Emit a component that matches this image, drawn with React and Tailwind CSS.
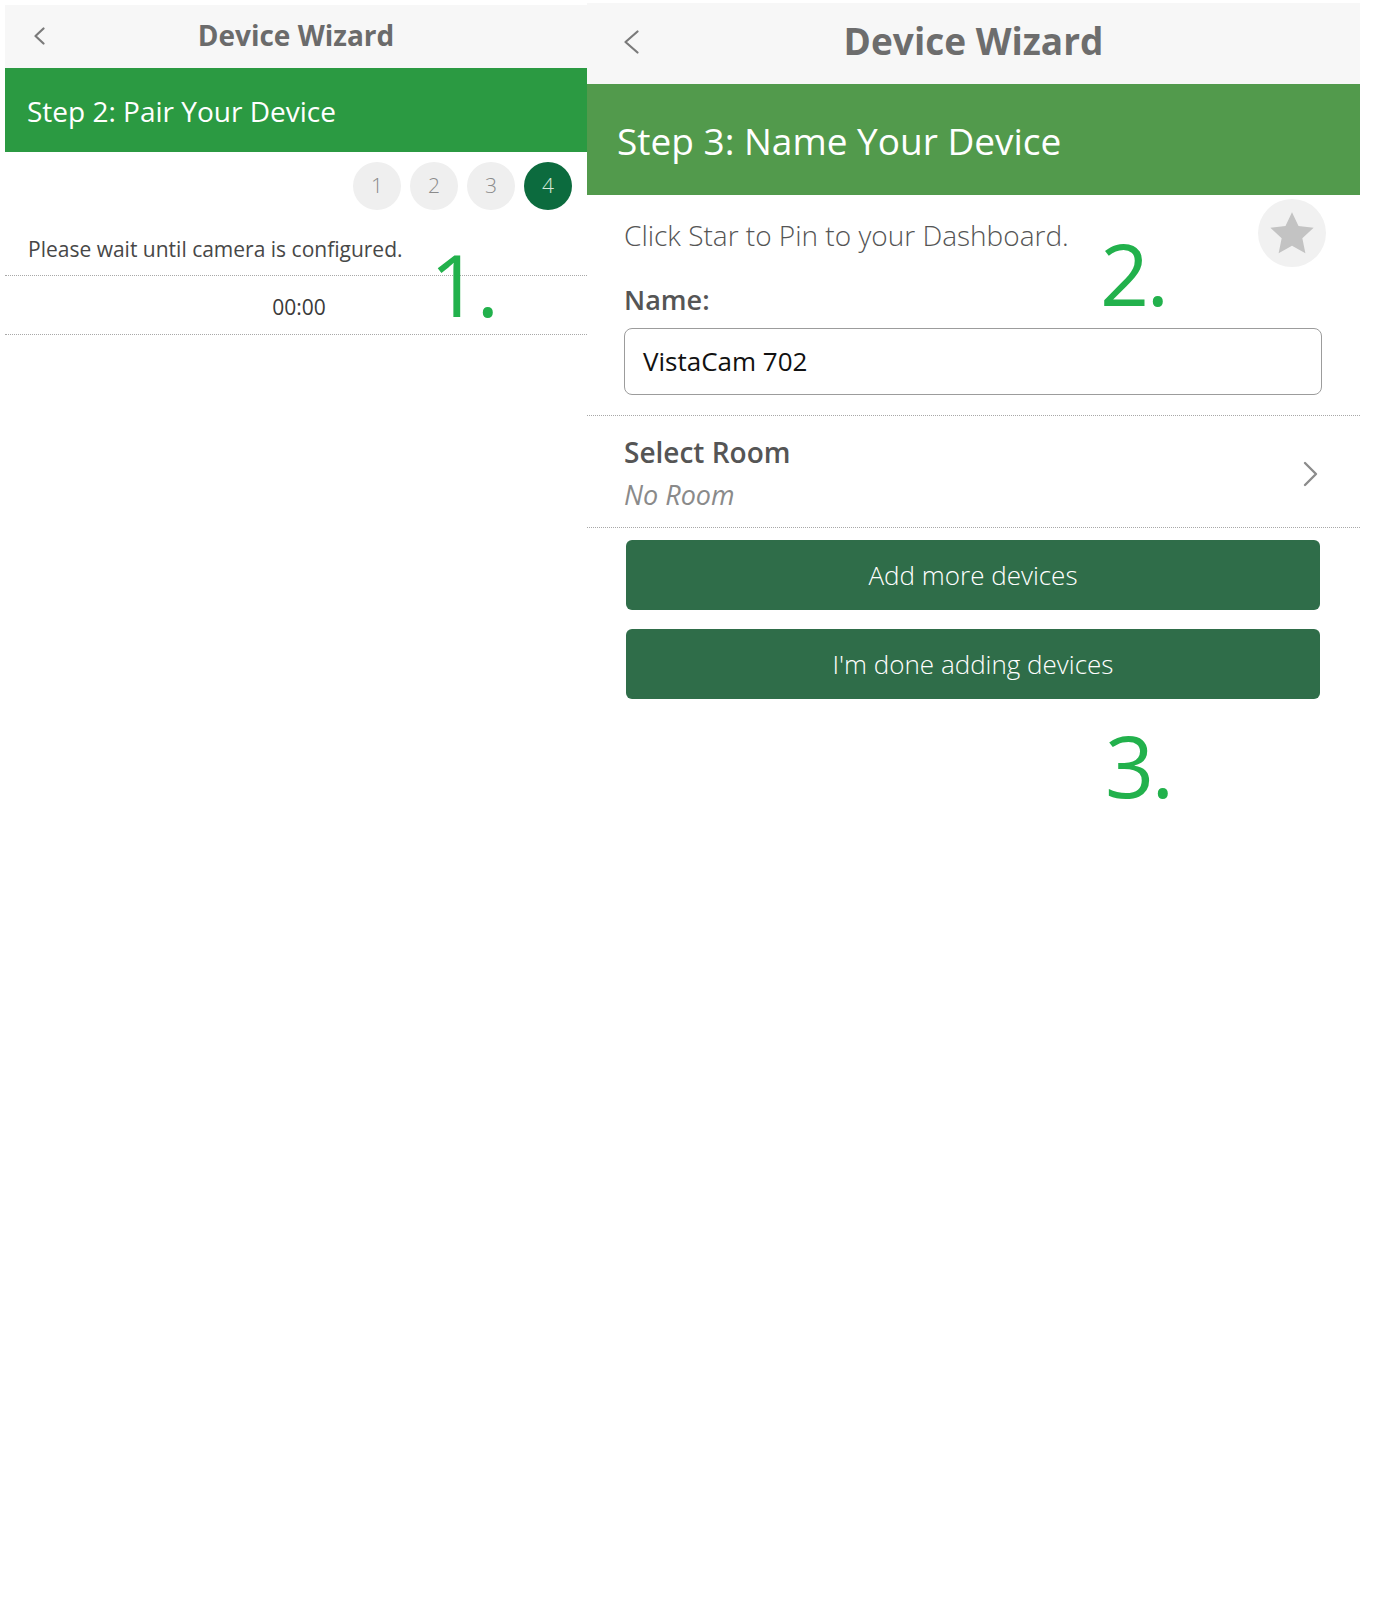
import React from "react";

const font = "font-['Open_Sans',_'Noto_Sans',_sans-serif]";

function BackChevron({ w, h }) {
  return (
    <svg width={w} height={h} viewBox={`0 0 ${w} ${h}`} fill="none">
      <polyline
        points={`${w - 1.5},1.5 1.5,${h / 2} ${w - 1.5},${h - 1.5}`}
        stroke="#7a7a7a"
        strokeWidth="2.2"
        strokeLinecap="round"
        strokeLinejoin="round"
      />
    </svg>
  );
}

function Mark({ children, className }) {
  return (
    <div
      className={`absolute text-[86px] leading-none text-[#22b14c] tracking-[-0.03em] ${className}`}
    >
      {children}
    </div>
  );
}

function PairPanel() {
  const steps = [1, 2, 3, 4];
  return (
    <div className="relative ml-[5px] mt-[5px] w-[582px]">
      <div className="relative flex h-[63px] items-center justify-center bg-[#f7f7f7] pb-[4px]">
        <div className="absolute left-[29px] top-[22px]">
          <BackChevron w={11} h={18} />
        </div>
        <h1 className="text-[28px] font-bold text-[#6b6b6b]">Device Wizard</h1>
      </div>
      <div className="flex h-[84px] items-center bg-[#2b9a42] pl-[22px] pt-[2px]">
        <h2 className="text-[28px] text-white">Step 2: Pair Your Device</h2>
      </div>

      <div className="flex justify-end gap-[9px] pr-[15px] pt-[10px]">
        {steps.map((s) => (
          <div
            key={s}
            className={`flex h-[48px] w-[48px] items-center justify-center rounded-full text-[21px] font-light ${
              s === 4 ? "bg-[#0c6b3e] text-[#d6e8dc]" : "bg-[#efefef] text-[#8a8a8a]"
            }`}
          >
            {s}
          </div>
        ))}
      </div>

      <div className="flex h-[66px] items-center border-b border-dotted border-[#a8a8a8] pl-[23px] pt-[14px]">
        <p className="text-[21px] text-[#474747]">Please wait until camera is configured.</p>
      </div>
      <div className="flex h-[59px] items-center justify-center border-b border-dotted border-[#a8a8a8] pt-[6px]">
        <span className="pl-[6px] text-[21px] font-medium text-[#3a3a3a]">00:00</span>
      </div>

      <Mark className="left-[425px] top-[236px]">1.</Mark>
    </div>
  );
}

function NamePanel() {
  return (
    <div className="relative mt-[3px] w-[773px]">
      <div className="relative flex h-[81px] items-center justify-center bg-[#f7f7f7] pb-[5px]">
        <div className="absolute left-[37px] top-[27px]">
          <BackChevron w={15} h={24} />
        </div>
        <h1 className="text-[37px] font-bold text-[#6d6d6d]">Device Wizard</h1>
      </div>
      <div className="flex h-[111px] items-center bg-[#529a4c] pl-[30px] pt-[3px]">
        <h2 className="text-[37px] text-white">Step 3: Name Your Device</h2>
      </div>

      <div className="border-b border-dotted border-[#a8a8a8]">
        <div className="pb-[20px] pl-[37px] pr-[38px]">
          <div className="mt-[4px] flex items-center justify-between">
            <p className="pt-[3px] text-[28px] font-light text-[#555]">
              Click Star to Pin to your Dashboard.
            </p>
            <div className="-mr-[4px] flex h-[68px] w-[68px] items-center justify-center rounded-full bg-[#f1f1f1]">
              <svg width="46" height="44" viewBox="0 0 24 23">
                <path
                  d="M12 0.6l3.4 7.3 7.9 0.9-5.9 5.4 1.6 7.9L12 18.2l-7 3.9 1.6-7.9-5.9-5.4 7.9-0.9z"
                  fill="#c3c3c3"
                />
              </svg>
            </div>
          </div>
          <label className="mt-[15px] block text-[27px] font-semibold leading-[36px] text-[#555]">
            Name:
          </label>
          <div className="mt-[10px] flex h-[67px] items-center rounded-[8px] border border-[#9c9c9c] pl-[18px]">
            <span className="text-[26px] text-[#111]">VistaCam 702</span>
          </div>
        </div>
      </div>

      <div className="flex items-center justify-between border-b border-dotted border-[#a8a8a8] pb-[14px] pl-[37px] pr-[42px] pt-[18px]">
        <div>
          <div className="text-[28px] font-semibold leading-[36px] text-[#555]">Select Room</div>
          <div className="mt-[7px] text-[27px] italic leading-[36px] text-[#8a8a8a]">No Room</div>
        </div>
        <svg width="15" height="26" viewBox="0 0 15 26" fill="none">
          <polyline
            points="2,2 13,13 2,24"
            stroke="#8c8c8c"
            strokeWidth="2.4"
            strokeLinecap="round"
            strokeLinejoin="round"
          />
        </svg>
      </div>

      <div className="flex flex-col gap-[19px] pl-[39px] pr-[40px] pt-[12px]">
        <button className="flex h-[70px] items-center justify-center rounded-[6px] bg-[#2f6d49] text-[26px] font-light text-white">
          Add more devices
        </button>
        <button className="flex h-[70px] items-center justify-center rounded-[6px] bg-[#2f6d49] text-[26px] font-light text-white">
          I'm done adding devices
        </button>
      </div>

      <Mark className="left-[513px] top-[227px]">2.</Mark>
      <Mark className="left-[518px] top-[719px]">3.</Mark>
    </div>
  );
}

export default function App() {
  return (
    <div className={`flex min-h-[1600px] w-[1374px] items-start bg-white ${font}`}>
      <PairPanel />
      <NamePanel />
    </div>
  );
}
